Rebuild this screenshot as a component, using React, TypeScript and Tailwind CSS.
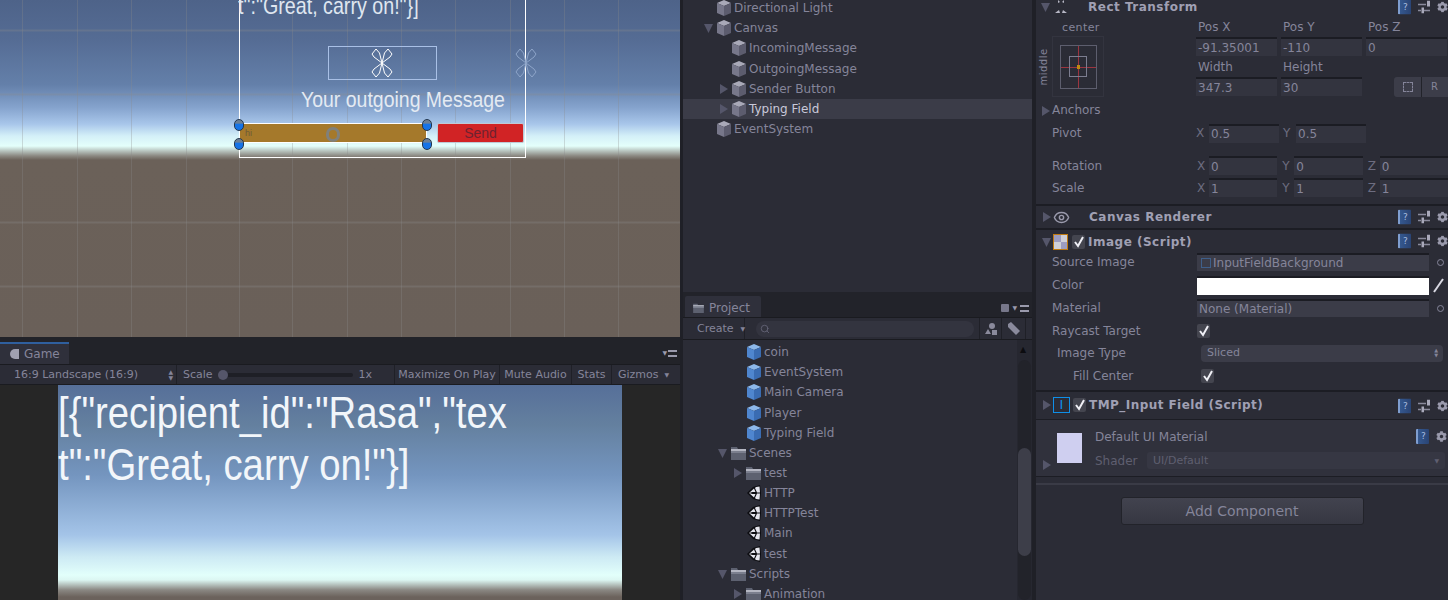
import { Eye, Search } from "lucide-react";
import { FaCog } from "react-icons/fa";

const skyScene =
  "bg-[linear-gradient(180deg,#4e6389_0px,#556c94_40px,#6480aa_85px,#86a4ce_108px,#a8c6ea_124px,#d4f0f8_136px,#e4fffb_146px,#8a8780_156px,#6b6159_160px,#6a6059_337px)]";
const skyGame =
  "bg-[linear-gradient(180deg,#566f99_0px,#64809f_40px,#7495bf_90px,#a4c4e8_150px,#cdeaf4_172px,#e2fffb_190px,#dcf6f2_195px,#8a8782_205px,#6b625c_212px)]";

function Tri({ down = false, className = "" }: { down?: boolean; className?: string }) {
  return (
    <svg width="10" height="12" viewBox="0 0 10 12" className={`shrink-0 ${className}`}>
      <polygon points={down ? "0,2 9,2 4.5,11" : "1,1 9,6 1,11"} fill="#55566a" />
    </svg>
  );
}

function Cube({ blue = false }: { blue?: boolean }) {
  const top = blue ? "#8db8ea" : "#a9a9b8";
  const left = blue ? "#4f86cf" : "#77778a";
  const right = blue ? "#3a6cb2" : "#5c5c6e";
  return (
    <svg width="14" height="16" viewBox="0 0 14 16" className="shrink-0">
      <polygon points="7,0 14,3 7,6 0,3" fill={top} />
      <polygon points="0,3 7,6 7,16 0,13" fill={left} />
      <polygon points="14,3 7,6 7,16 14,13" fill={right} />
    </svg>
  );
}

function Folder({ small = false }: { small?: boolean }) {
  return (
    <svg width={small ? 11 : 15} height={small ? 10 : 14} viewBox="0 0 15 14" className="shrink-0">
      <path d="M0 1h6l1 2h8v11H0z" fill="#5d6170" />
      <rect x="0" y="3" width="15" height="2" fill="#b4b6c2" />
      <rect x="0" y="5" width="15" height="2" fill="#7b7f8e" />
    </svg>
  );
}

function UnityLogo() {
  return (
    <svg width="14" height="16" viewBox="0 0 14 16" className="shrink-0">
      <polygon points="0,8 6,2 13,0 14,8 13,16 6,14" fill="#0c0c10" />
      <path d="M2 8 L7 3.5 L8.5 7 H5.5 Z M2 8 L7 12.5 L8.5 9 H5.5 Z M9 2 L12.5 1.5 L13 7.5 H10 L8 3 Z M9 14 L12.5 14.5 L13 8.5 H10 L8 13 Z" fill="#e6e6ee" />
    </svg>
  );
}

function TreeRow({
  label,
  indent,
  icon,
  tri,
  selected = false,
  bright = false,
}: {
  label: string;
  indent: string;
  icon: React.ReactNode;
  tri?: "down" | "right";
  selected?: boolean;
  bright?: boolean;
}) {
  return (
    <div className={`relative flex h-[20.17px] shrink-0 items-center gap-[3px] ${indent} ${selected ? "bg-[#3b3c48]" : ""}`}>
      {tri && <Tri down={tri === "down"} className="absolute ml-[-13px]" />}
      {icon}
      <span className={`whitespace-nowrap ${bright ? "text-[#c9c9da]" : "text-[#85859a]"}`}>{label}</span>
    </div>
  );
}

function BookIcon() {
  return (
    <div className="flex h-[15px] w-[13px] shrink-0 items-center justify-center rounded-[1px] border-l-2 border-[#7f9ed0] bg-[linear-gradient(90deg,#35588f,#2a4474)] text-[9px] leading-[9px] text-[#a9bde0]">
      ?
    </div>
  );
}

function Sliders() {
  return (
    <svg width="12" height="13" viewBox="0 0 12 13" className="shrink-0">
      <path d="M0 4h8M0 10h3M6 10h6" stroke="#8a8a9c" strokeWidth="1.6" />
      <rect x="9" y="0" width="3" height="6" fill="#a9a9ba" />
      <rect x="3.5" y="7" width="2.5" height="6" fill="#a9a9ba" />
    </svg>
  );
}

function HeaderIcons() {
  return (
    <div className="absolute right-[0px] top-1/2 flex w-[50px] -translate-y-1/2 items-center gap-[7px]">
      <BookIcon />
      <Sliders />
      <FaCog className="h-[11px] w-[11px] shrink-0 text-[#9a9aac]" />
    </div>
  );
}

function CheckBox({ className = "" }: { className?: string }) {
  return (
    <div className={`flex h-[14px] w-[13px] shrink-0 items-center justify-center rounded-[2px] bg-[#44454f] ${className}`}>
      <svg width="12" height="12" viewBox="0 0 12 12">
        <path d="M2 6l3 4 5-9" fill="none" stroke="#f0f0f6" strokeWidth="2" />
      </svg>
    </div>
  );
}

function Field({ value, className = "" }: { value: string; className?: string }) {
  return (
    <div className={`flex h-[19px] items-center overflow-hidden border-t-2 border-[#1b1c23] bg-[#33343f] pl-[2px] text-[#85859a] ${className}`}>
      {value}
    </div>
  );
}

function AxisFields({ items }: { items: [string, string][] }) {
  return (
    <div className="grid w-[257px] grid-cols-3 gap-[4px]">
      {items.map(([axis, value]) => (
        <div key={axis} className="flex items-center">
          <span className="w-[13px] shrink-0 pl-[1px] text-[#6d6d80]">{axis}</span>
          <Field value={value} className="flex-1" />
        </div>
      ))}
    </div>
  );
}

function Petals({ color }: { color: string }) {
  return (
    <svg width="26" height="30" viewBox="0 0 26 30" fill="none" stroke={color} strokeWidth="1">
      <path d="M13 15 L5 9 L3 6 L7 1 L10.5 5 Z" />
      <path d="M13 15 L21 9 L23 6 L19 1 L15.5 5 Z" />
      <path d="M13 15 L5 21 L3 24 L7 29 L10.5 25 Z" />
      <path d="M13 15 L21 21 L23 24 L19 29 L15.5 25 Z" />
    </svg>
  );
}

function Handle({ className }: { className: string }) {
  return (
    <div className={`absolute h-[12px] w-[10px] rounded-full border border-[#22364f] bg-[linear-gradient(180deg,#6d7f94_0%,#6d7f94_30%,#1673e6_45%,#1673e6_100%)] ${className}`} />
  );
}

function SceneView() {
  return (
    <div className={`relative h-[337px] shrink-0 overflow-hidden ${skyScene}`}>
      <svg className="absolute inset-0" width="680" height="337" stroke="#8a8a8a" strokeOpacity="0.3">
        {[22, 77, 131, 186, 239, 292, 347, 401, 455, 510, 564, 618].map((x) => (
          <line key={x} x1={x + 0.5} y1="0" x2={x + 0.5} y2="337" />
        ))}
        {[30, 94, 222, 286].map((y) => (
          <line key={y} x1="0" y1={y + 0.5} x2="680" y2={y + 0.5} strokeWidth="2" />
        ))}
      </svg>
      <div className="absolute left-[239px] top-[-2px] h-[160px] w-[287px] border border-white" />
      <div className="absolute left-[238px] top-[-8px] origin-left scale-x-[0.82] whitespace-nowrap font-['Liberation_Sans',sans-serif] text-[24px] leading-[28px] text-[#dfe6f0]">
        {'t":"Great, carry on!"}]'}
      </div>
      <div className="absolute left-[328px] top-[46px] h-[34px] w-[109px] border border-[#a9c0e6]" />
      <div className="absolute left-[369px] top-[48px]"><Petals color="#ffffff" /></div>
      <div className="absolute left-[513px] top-[48px]"><Petals color="#8ea5c9" /></div>
      <div className="absolute left-[301px] top-[86px] origin-left scale-x-[0.885] whitespace-nowrap font-['Liberation_Sans',sans-serif] text-[22px] leading-[28px] text-[#e4eaf2]">
        Your outgoing Message
      </div>
      <div className="absolute left-[239px] top-[123px] flex h-[20px] w-[188px] items-center border border-white bg-[#a5792b] pl-[5px] font-['Liberation_Sans',sans-serif] text-[9px] text-[#6b5a38]">
        hi
      </div>
      <div className="absolute left-[326px] top-[127px] h-[15px] w-[14px] rounded-full border-[3px] border-[#80807a]" />
      <div className="absolute left-[437px] top-[123px] flex h-[20px] w-[87px] items-center justify-center rounded-[2px] border border-[#c0c9d4] bg-[#d12325] font-['Liberation_Sans',sans-serif] text-[14px] text-[#6e2230]">
        Send
      </div>
      <Handle className="left-[234px] top-[119px]" />
      <Handle className="left-[234px] top-[138px]" />
      <Handle className="left-[422px] top-[119px]" />
      <Handle className="left-[422px] top-[138px]" />
    </div>
  );
}

function GameView() {
  return (
    <div className="flex h-[263px] flex-col bg-[#222329]">
      <div className="relative h-[5px] shrink-0" />
      <div className="relative flex h-[22px] shrink-0">
        <div className="flex w-[69px] items-center gap-[5px] border-t-2 border-[#2f5f9e] bg-[#2f303b] pl-[10px] text-[#85859a]">
          <span className="h-[10px] w-[9px] rounded-l-full bg-[#a0a0b0]" />
          Game
        </div>
        <div className="ml-auto mr-[3px] flex items-center gap-[1px] text-[#9a9aac]">
          <span className="text-[6px]">▼</span>
          <span className="h-[7px] w-[9px] border-y-2 border-[#9a9aac]" />
        </div>
      </div>
      <div className="flex h-[21px] shrink-0 items-center border-y border-[#1a1b20] bg-[#2b2c36] text-[11px] text-[#85859a]">
        <div className="flex h-full w-[177px] items-center justify-between border-r border-[#1f2027] pl-[14px] pr-[3px]">
          <span className="whitespace-nowrap">16:9 Landscape (16:9)</span>
          <span className="text-[6px] leading-[6px]">▲<br />▼</span>
        </div>
        <div className="flex h-full w-[218px] items-center border-r border-[#1f2027] pl-[6px]">
          <span>Scale</span>
          <span className="relative ml-[7px] h-[4px] w-[133px] rounded-full bg-[#1e1f26]">
            <span className="absolute left-[-2px] top-[-3px] h-[10px] w-[10px] rounded-full bg-[#55566a]" />
          </span>
          <span className="ml-[6px]">1x</span>
        </div>
        <div className="flex h-full w-[105px] items-center justify-center whitespace-nowrap border-r border-[#1f2027]">Maximize On Play</div>
        <div className="flex h-full w-[72px] items-center justify-center whitespace-nowrap border-r border-[#1f2027]">Mute Audio</div>
        <div className="flex h-full w-[40px] items-center justify-center border-r border-[#1f2027]">Stats</div>
        <div className="flex h-full items-center pl-[6px]">
          Gizmos
          <span className="ml-[6px] text-[6px]">▼</span>
        </div>
      </div>
      <div className="flex flex-1 justify-center overflow-hidden bg-[#262626]">
        <div className={`relative h-[215px] w-[564px] overflow-hidden pt-[2px] ${skyGame}`}>
          <div className="w-[500px] origin-left scale-x-[0.87] whitespace-nowrap font-['Liberation_Sans',sans-serif] text-[44px] leading-[52px] text-[#f2f6fa]">
            {'[{"recipient_id":"Rasa","tex'}
            <br />
            {'t":"Great, carry on!"}]'}
          </div>
        </div>
      </div>
    </div>
  );
}

function Hierarchy() {
  return (
    <div className="h-[292px] shrink-0 overflow-hidden bg-[#2b2c36]">
      <div className="mt-[-2px] flex flex-col">
        <TreeRow label="Directional Light" indent="pl-[34px]" icon={<Cube />} />
        <TreeRow label="Canvas" indent="pl-[34px]" icon={<Cube />} tri="down" />
        <TreeRow label="IncomingMessage" indent="pl-[49px]" icon={<Cube />} />
        <TreeRow label="OutgoingMessage" indent="pl-[49px]" icon={<Cube />} />
        <TreeRow label="Sender Button" indent="pl-[49px]" icon={<Cube />} tri="right" />
        <TreeRow label="Typing Field" indent="pl-[49px]" icon={<Cube />} tri="right" selected bright />
        <TreeRow label="EventSystem" indent="pl-[34px]" icon={<Cube />} />
      </div>
    </div>
  );
}

function ProjectPanel() {
  return (
    <div className="flex min-h-0 flex-1 flex-col bg-[#22232a]">
      <div className="relative flex h-[25px] shrink-0 items-end pl-[2px]">
        <div className="flex h-[21px] w-[76px] items-center gap-[5px] rounded-t-[2px] bg-[#2f303b] pl-[8px] pt-[2px] text-[#85859a]">
          <Folder small />
          Project
        </div>
        <div className="absolute right-[3px] top-[9px] flex items-center gap-[3px]">
          <span className="h-[8px] w-[8px] rounded-[1px] bg-[#77778a]" />
          <span className="text-[6px] text-[#9a9aac]">▼</span>
          <span className="h-[7px] w-[9px] border-y-2 border-[#9a9aac]" />
        </div>
      </div>
      <div className="flex h-[23px] shrink-0 items-center border-y border-[#1a1b20] bg-[#2b2c36] text-[11px] text-[#85859a]">
        <div className="flex h-full w-[62px] items-center gap-[7px] border-r border-[#1f2027] pl-[14px]">
          Create <span className="text-[6px]">▼</span>
        </div>
        <div className="ml-[11px] flex h-[16px] w-[218px] items-center rounded-full bg-[#33343f] pl-[4px]">
          <Search size={10} className="text-[#66667a]" />
        </div>
        <div className="ml-[5px] flex h-full w-[23px] items-center justify-center border-x border-[#1f2027]">
          <svg width="12" height="12" viewBox="0 0 12 12" fill="#8a8a9c"><circle cx="7" cy="3" r="3" /><polygon points="3,6 6,11 0,11" /><rect x="7" y="7" width="5" height="5" /></svg>
        </div>
        <div className="flex h-full w-[24px] items-center justify-center border-r border-[#1f2027]">
          <svg width="12" height="13" viewBox="0 0 12 13" fill="#8a8a9c"><polygon points="0,2 3,0 12,9 8,13 0,5" /></svg>
        </div>
      </div>
      <div className="flex min-h-0 flex-1 bg-[#2b2c36]">
        <div className="flex min-w-0 flex-1 flex-col overflow-hidden pt-[2px]">
          <TreeRow label="coin" indent="pl-[64px]" icon={<Cube blue />} />
          <TreeRow label="EventSystem" indent="pl-[64px]" icon={<Cube blue />} />
          <TreeRow label="Main Camera" indent="pl-[64px]" icon={<Cube blue />} />
          <TreeRow label="Player" indent="pl-[64px]" icon={<Cube blue />} />
          <TreeRow label="Typing Field" indent="pl-[64px]" icon={<Cube blue />} />
          <TreeRow label="Scenes" indent="pl-[48px]" icon={<Folder />} tri="down" />
          <TreeRow label="test" indent="pl-[63px]" icon={<Folder />} tri="right" />
          <TreeRow label="HTTP" indent="pl-[64px]" icon={<UnityLogo />} />
          <TreeRow label="HTTPTest" indent="pl-[64px]" icon={<UnityLogo />} />
          <TreeRow label="Main" indent="pl-[64px]" icon={<UnityLogo />} />
          <TreeRow label="test" indent="pl-[64px]" icon={<UnityLogo />} />
          <TreeRow label="Scripts" indent="pl-[48px]" icon={<Folder />} tri="down" />
          <TreeRow label="Animation" indent="pl-[63px]" icon={<Folder />} tri="right" />
        </div>
        <div className="relative w-[15px] shrink-0 bg-[#262730]">
          <span className="absolute left-[3px] top-[6px] text-[8px] leading-[8px] text-[#0c0c10]">▲</span>
          <div className="absolute bottom-0 left-[1px] top-[20px] w-[13px] rounded-full bg-[#22232a]" />
          <div className="absolute left-[1px] top-[108px] h-[108px] w-[13px] rounded-full bg-[#3d3e49]" />
        </div>
      </div>
    </div>
  );
}

function ComponentHeader({ children, height }: { children: React.ReactNode; height: string }) {
  return (
    <div className={`relative flex shrink-0 items-center border-b-2 border-[#1c1d24] ${height}`}>
      {children}
      <HeaderIcons />
    </div>
  );
}

function Label({ children, className = "pl-[16px]" }: { children: React.ReactNode; className?: string }) {
  return <div className={`w-[160px] shrink-0 whitespace-nowrap text-[#85859a] ${className}`}>{children}</div>;
}

function Inspector() {
  return (
    <div className="flex h-full flex-1 flex-col overflow-hidden bg-[#2b2c36]">
      {/* Rect Transform */}
      <div className="relative flex h-[14px] shrink-0 items-center">
        <Tri down className="ml-[5px]" />
        <svg width="16" height="14" viewBox="0 0 16 14" fill="#b8b8c6" className="ml-[2px]"><path d="M2 13l4-3 1 3zM14 13l-4-3-1 3zM5 0l2 2-2 1zM11 0l-2 2 2 1z" /></svg>
        <span className="ml-[19px] font-bold tracking-[0.5px] text-[#a0a0b4]">Rect Transform</span>
        <HeaderIcons />
      </div>
      <div className="relative flex h-[83px] shrink-0 flex-col">
        <div className="absolute left-[26px] top-[7px] text-[11px] tracking-[0.4px] text-[#85859a]">center</div>
        <div className="absolute left-[-11px] top-[47px] -rotate-90 whitespace-nowrap text-[10px] leading-[12px] tracking-[0.5px] text-[#85859a]">middle</div>
        <div className="absolute left-[16px] top-[22px] flex h-[61px] w-[52px] items-center justify-center border border-[#33343f]">
          <div className="relative h-[44px] w-[37px] border border-[#5d5e6e]">
            <div className="absolute left-1/2 top-0 h-full w-px bg-[#9c3540]" />
            <div className="absolute left-0 top-1/2 h-px w-full bg-[#9c3540]" />
            <div className="absolute left-[8px] top-[10px] h-[21px] w-[18px] border border-[#7c7d90]" />
            <div className="absolute left-[16px] top-[19px] h-[4px] w-[3px] bg-[#c08a10]" />
          </div>
        </div>
        <div className="ml-[160px] grid grid-cols-[81px_81px_81px] gap-x-[4px] text-[#85859a]">
          <div className="flex h-[23px] items-end pb-[3px] pl-[2px]">Pos X</div>
          <div className="flex h-[23px] items-end pb-[3px] pl-[2px]">Pos Y</div>
          <div className="flex h-[23px] items-end pb-[3px] pl-[2px]">Pos Z</div>
          <Field value="-91.35001" />
          <Field value="-110" />
          <Field value="0" />
          <div className="flex h-[21px] items-end pb-[3px] pl-[2px]">Width</div>
          <div className="flex h-[21px] items-end pb-[3px] pl-[2px]">Height</div>
          <div />
          <Field value="347.3" />
          <Field value="30" />
          <div className="ml-[28px] flex h-[20px] w-[60px] items-center rounded-[3px] bg-[#3c3d49] text-[10px]">
            <span className="flex h-full w-[28px] items-center justify-center border-r border-[#22232a]">
              <span className="h-[10px] w-[10px] border border-dashed border-[#85859a]" />
            </span>
            <span className="pl-[9px]">R</span>
          </div>
        </div>
      </div>
      <div className="flex h-[26px] shrink-0 items-end pb-[6px]">
        <Tri className="ml-[5px]" />
        <span className="ml-[1px] text-[#85859a]">Anchors</span>
      </div>
      <div className="flex h-[19px] shrink-0 items-center pt-[1px]">
        <Label>Pivot</Label>
        <div className="grid w-[170px] grid-cols-2 gap-[4px]">
          <div className="flex items-center"><span className="w-[13px] text-[#6d6d80]">X</span><Field value="0.5" className="flex-1" /></div>
          <div className="flex items-center"><span className="w-[13px] text-[#6d6d80]">Y</span><Field value="0.5" className="flex-1" /></div>
        </div>
      </div>
      <div className="h-[14px] shrink-0" />
      <div className="flex h-[19px] shrink-0 items-center">
        <Label>Rotation</Label>
        <AxisFields items={[["X", "0"], ["Y", "0"], ["Z", "0"]]} />
      </div>
      <div className="h-[3px] shrink-0" />
      <div className="flex h-[19px] shrink-0 items-center">
        <Label>Scale</Label>
        <AxisFields items={[["X", "1"], ["Y", "1"], ["Z", "1"]]} />
      </div>
      <div className="h-[9px] shrink-0 border-b-2 border-[#1c1d24]" />

      {/* Canvas Renderer */}
      <ComponentHeader height="h-[24px]">
        <Tri className="ml-[6px]" />
        <Eye size={17} className="ml-[1px] text-[#9a9aac]" />
        <span className="ml-[19px] font-bold tracking-[0.5px] text-[#a0a0b4]">Canvas Renderer</span>
      </ComponentHeader>

      {/* Image */}
      <div className="relative flex h-[21px] shrink-0 items-center pt-[3px]">
        <Tri down className="ml-[6px]" />
        <div className="ml-[1px] grid h-[16px] w-[15px] shrink-0 grid-cols-2 grid-rows-2 border border-[#c07a10]">
          <span className="bg-[#9c9cc0]" /><span className="bg-[#d0d0d8]" /><span className="bg-[#d0d0d8]" /><span className="bg-[#9c9cc0]" />
        </div>
        <CheckBox className="ml-[4px]" />
        <span className="ml-[3px] font-bold tracking-[0.5px] text-[#a0a0b4]">Image (Script)</span>
        <HeaderIcons />
      </div>
      <div className="flex h-[22px] shrink-0 items-center">
        <Label>Source Image</Label>
        <div className="ml-[1px] flex h-[18px] w-[232px] items-center border-t-2 border-[#1b1c23] bg-[#3b3c48] pl-[4px] text-[#85859a]">
          <span className="mr-[2px] h-[10px] w-[10px] border border-[#3f5f8a]" />
          InputFieldBackground
        </div>
        <span className="ml-[8px] h-[7px] w-[7px] rounded-full border border-[#85859a]" />
      </div>
      <div className="flex h-[24px] shrink-0 items-center">
        <Label>Color</Label>
        <div className="ml-[1px] h-[19px] w-[232px] border-t-2 border-[#1b1c23] bg-white" />
        <svg width="12" height="16" viewBox="0 0 12 16" className="ml-[4px]"><path d="M1 15L10 2" stroke="#d8d8e2" strokeWidth="2" /></svg>
      </div>
      <div className="flex h-[22px] shrink-0 items-center">
        <Label>Material</Label>
        <div className="ml-[1px] flex h-[18px] w-[232px] items-center border-t-2 border-[#1b1c23] bg-[#3b3c48] pl-[2px] text-[#85859a]">None (Material)</div>
        <span className="ml-[8px] h-[7px] w-[7px] rounded-full border border-[#85859a]" />
      </div>
      <div className="flex h-[23px] shrink-0 items-center">
        <Label>Raycast Target</Label>
        <CheckBox className="ml-[1px]" />
      </div>
      <div className="flex h-[22px] shrink-0 items-center">
        <Label className="pl-[21px]">Image Type</Label>
        <div className="ml-[5px] flex h-[17px] w-[242px] items-center justify-between rounded-[4px] bg-[#3b3c48] pl-[6px] pr-[5px] text-[11px] text-[#85859a]">
          Sliced
          <span className="text-[5px] leading-[5px]">▲<br />▼</span>
        </div>
      </div>
      <div className="flex h-[24px] shrink-0 items-center">
        <Label className="pl-[37px]">Fill Center</Label>
        <CheckBox className="ml-[5px]" />
      </div>
      <div className="h-[4px] shrink-0 border-b-2 border-[#1c1d24]" />

      {/* TMP Input Field */}
      <div className="relative flex h-[28px] shrink-0 items-center border-b border-[#1c1d24] pb-[2px]">
        <Tri className="ml-[6px]" />
        <div className="ml-[1px] flex h-[16px] w-[17px] shrink-0 items-center justify-center border border-[#0f8fe8] text-[13px] leading-[13px] text-[#0f8fe8]">I</div>
        <CheckBox className="ml-[3px]" />
        <span className="ml-[3px] font-bold tracking-[0.45px] text-[#a0a0b4]">TMP_Input Field (Script)</span>
        <HeaderIcons />
      </div>

      {/* Material preview */}
      <div className="relative flex h-[57px] shrink-0 border-b border-[#1c1d24] bg-[#30313c]">
        <Tri className="absolute left-[6px] top-[39px]" />
        <div className="ml-[21px] mt-[13px] h-[30px] w-[25px] bg-[#cfcff0]" />
        <div className="ml-[13px] flex flex-1 flex-col">
          <div className="mt-[10px] text-[#85859a]">Default UI Material</div>
          <div className="mt-[8px] flex items-center">
            <span className="w-[52px] text-[#5f5f70]">Shader</span>
            <div className="flex h-[17px] w-[298px] items-center justify-between rounded-[3px] bg-[#363743] px-[6px] text-[11px] text-[#5f5f70]">
              UI/Default <span className="text-[6px]">▼</span>
            </div>
          </div>
        </div>
        <div className="absolute right-[1px] top-[9px] flex items-center gap-[7px]">
          <BookIcon />
          <FaCog className="h-[11px] w-[11px] text-[#9a9aac]" />
        </div>
      </div>
      <div className="h-[8px] shrink-0 border-b-2 border-[#3a3b46]" />

      <div className="flex justify-center pt-[12px]">
        <div className="flex h-[28px] w-[243px] items-center justify-center rounded-[3px] border border-[#22232a] bg-[linear-gradient(180deg,#42434f,#363742)] text-[14px] text-[#85859a]">
          Add Component
        </div>
      </div>
    </div>
  );
}

export default function App() {
  return (
    <div className="flex h-[600px] w-[1448px] overflow-hidden bg-[#1f2027] font-['DejaVu_Sans',sans-serif] text-[12px] leading-[14px]">
      <div className="flex w-[680px] shrink-0 flex-col">
        <SceneView />
        <GameView />
      </div>
      <div className="ml-[3px] mr-[4px] flex w-[349px] shrink-0 flex-col">
        <Hierarchy />
        <ProjectPanel />
      </div>
      <div className="flex min-w-0 flex-1">
        <Inspector />
      </div>
    </div>
  );
}
